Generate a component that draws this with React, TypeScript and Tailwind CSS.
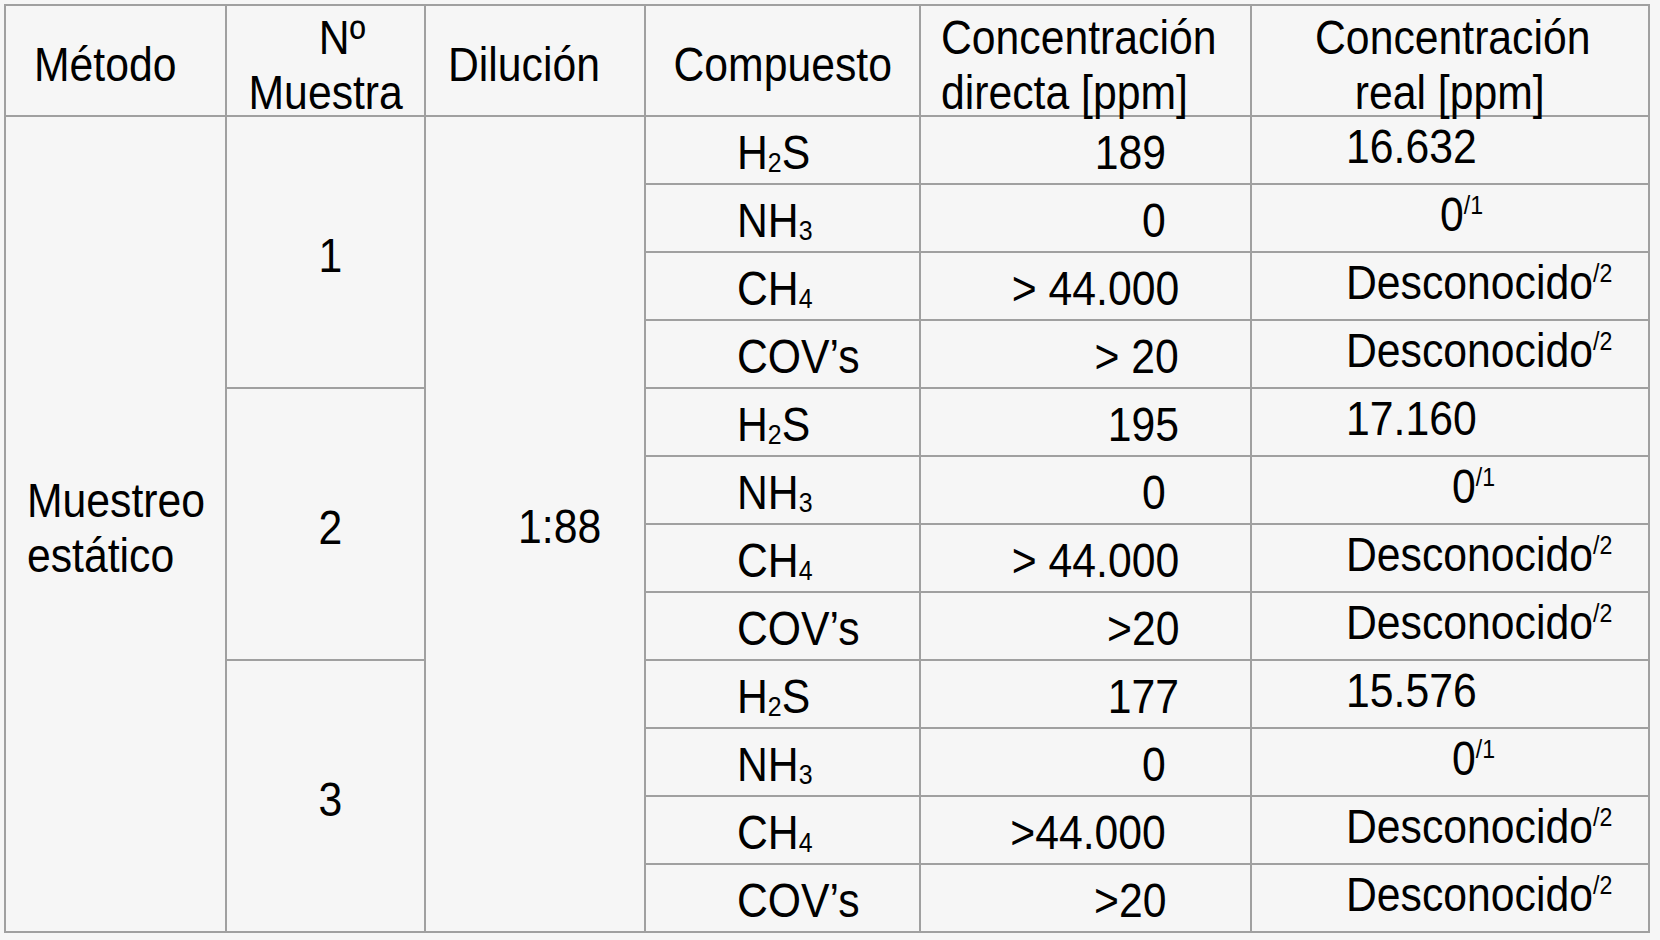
import React from 'react';

type Row = {
  comp: React.ReactNode;
  direct: string;
  directPad: 'near' | 'far';
  real: React.ReactNode;
  realPad: 'text' | 'zero1' | 'zero';
};

const Sub = ({ children }: { children: React.ReactNode }) => <span className="text-[28px] leading-none align-[-3px]">{children}</span>;

const Sup = ({ children }: { children: React.ReactNode }) => <span className="text-[26px] leading-none align-[17px]">{children}</span>;

const Txt = ({ children, origin = 'left' }: { children: React.ReactNode; origin?: 'left' | 'right' | 'center' }) => {
  const o = origin === 'left' ? 'origin-left' : origin === 'right' ? 'origin-right' : 'origin-center';
  return <span className={`inline-block whitespace-nowrap scale-x-89 ${o}`}>{children}</span>;
};

const h2s = <>H<Sub>2</Sub>S</>;
const nh3 = <>NH<Sub>3</Sub></>;
const ch4 = <>CH<Sub>4</Sub></>;
const covs = <>COV’s</>;
const zero = <>0<Sup>/1</Sup></>;
const unknown = <>Desconocido<Sup>/2</Sup></>;

const groups: { n: string; rows: Row[] }[] = [{
  n: '1',
  rows: [
    { comp: h2s, direct: '189', directPad: 'far', real: '16.632', realPad: 'text' },
    { comp: nh3, direct: '0', directPad: 'far', real: zero, realPad: 'zero1' },
    { comp: ch4, direct: '> 44.000', directPad: 'near', real: unknown, realPad: 'text' },
    { comp: covs, direct: '> 20', directPad: 'near', real: unknown, realPad: 'text' }
  ]
}, {
  n: '2',
  rows: [
    { comp: h2s, direct: '195', directPad: 'near', real: '17.160', realPad: 'text' },
    { comp: nh3, direct: '0', directPad: 'far', real: zero, realPad: 'zero' },
    { comp: ch4, direct: '> 44.000', directPad: 'near', real: unknown, realPad: 'text' },
    { comp: covs, direct: '>20', directPad: 'near', real: unknown, realPad: 'text' }
  ]
}, {
  n: '3',
  rows: [
    { comp: h2s, direct: '177', directPad: 'near', real: '15.576', realPad: 'text' },
    { comp: nh3, direct: '0', directPad: 'far', real: zero, realPad: 'zero' },
    { comp: ch4, direct: '>44.000', directPad: 'far', real: unknown, realPad: 'text' },
    { comp: covs, direct: '>20', directPad: 'far', real: unknown, realPad: 'text' }
  ]
}];

const cell = 'border-r-2 border-b-2 border-[#a0a0a0] flex items-center';

export default function App() {
  return <div className="w-[1660px] h-[940px] bg-[#f6f6f6] pl-[4px] pt-[4px] text-black text-[48px] leading-[55px] font-['Liberation_Sans',Arial,sans-serif] overflow-hidden">
      <div className="w-fit grid grid-cols-[221px_199px_220px_275px_331px_398px] grid-rows-[111px_repeat(12,68px)] border-l-2 border-t-2 border-[#a0a0a0]">
        {/* Header */}
        <div className={`${cell} pl-[28px] pt-2`}><Txt>Método</Txt></div>
        <div className={`${cell} flex-col justify-center pt-2`}>
          <div className="w-full text-center pl-[33px]"><Txt origin="center">Nº</Txt></div>
          <div className="w-full text-center"><Txt origin="center">Muestra</Txt></div>
        </div>
        <div className={`${cell} pl-[22px] pt-2`}><Txt>Dilución</Txt></div>
        <div className={`${cell} justify-center pt-2`}><Txt origin="center">Compuesto</Txt></div>
        <div className={`${cell} flex-col justify-center items-start pl-[20px] pt-2`}>
          <Txt>Concentración</Txt>
          <Txt>directa [ppm]</Txt>
        </div>
        <div className={`${cell} flex-col justify-center pt-2`}>
          <div className="w-full text-center pl-[6px]"><Txt origin="center">Concentración</Txt></div>
          <div className="w-full text-center"><Txt origin="center">real [ppm]</Txt></div>
        </div>

        {/* Body */}
        {groups.map((g, gi) => <React.Fragment key={g.n}>
            {g.rows.map((r, ri) => <React.Fragment key={ri}>
                {gi === 0 && ri === 0 && <div className={`${cell} row-span-12 flex-col justify-center items-start pl-[21px] pt-[7px]`}>
                    <Txt>Muestreo</Txt>
                    <Txt>estático</Txt>
                  </div>}
                {ri === 0 && <div className={`${cell} row-span-4 justify-center pl-[9px] pt-[7px]`}><Txt origin="center">{g.n}</Txt></div>}
                {gi === 0 && ri === 0 && <div className={`${cell} row-span-12 pl-[92px] pt-[5px]`}><Txt>1:88</Txt></div>}
                <div className={`${cell} pl-[91px] pt-[5px]`}><Txt>{r.comp}</Txt></div>
                <div className={`${cell} justify-end pt-[5px] ${r.directPad === 'far' ? 'pr-[84px]' : 'pr-[71px]'}`}><Txt origin="right">{r.direct}</Txt></div>
                <div className={`${cell} pb-[7px] ${r.realPad === 'text' ? 'pl-[94px]' : r.realPad === 'zero1' ? 'pl-[188px]' : 'pl-[200px]'}`}><Txt>{r.real}</Txt></div>
              </React.Fragment>)}
          </React.Fragment>)}
      </div>
    </div>;
}
